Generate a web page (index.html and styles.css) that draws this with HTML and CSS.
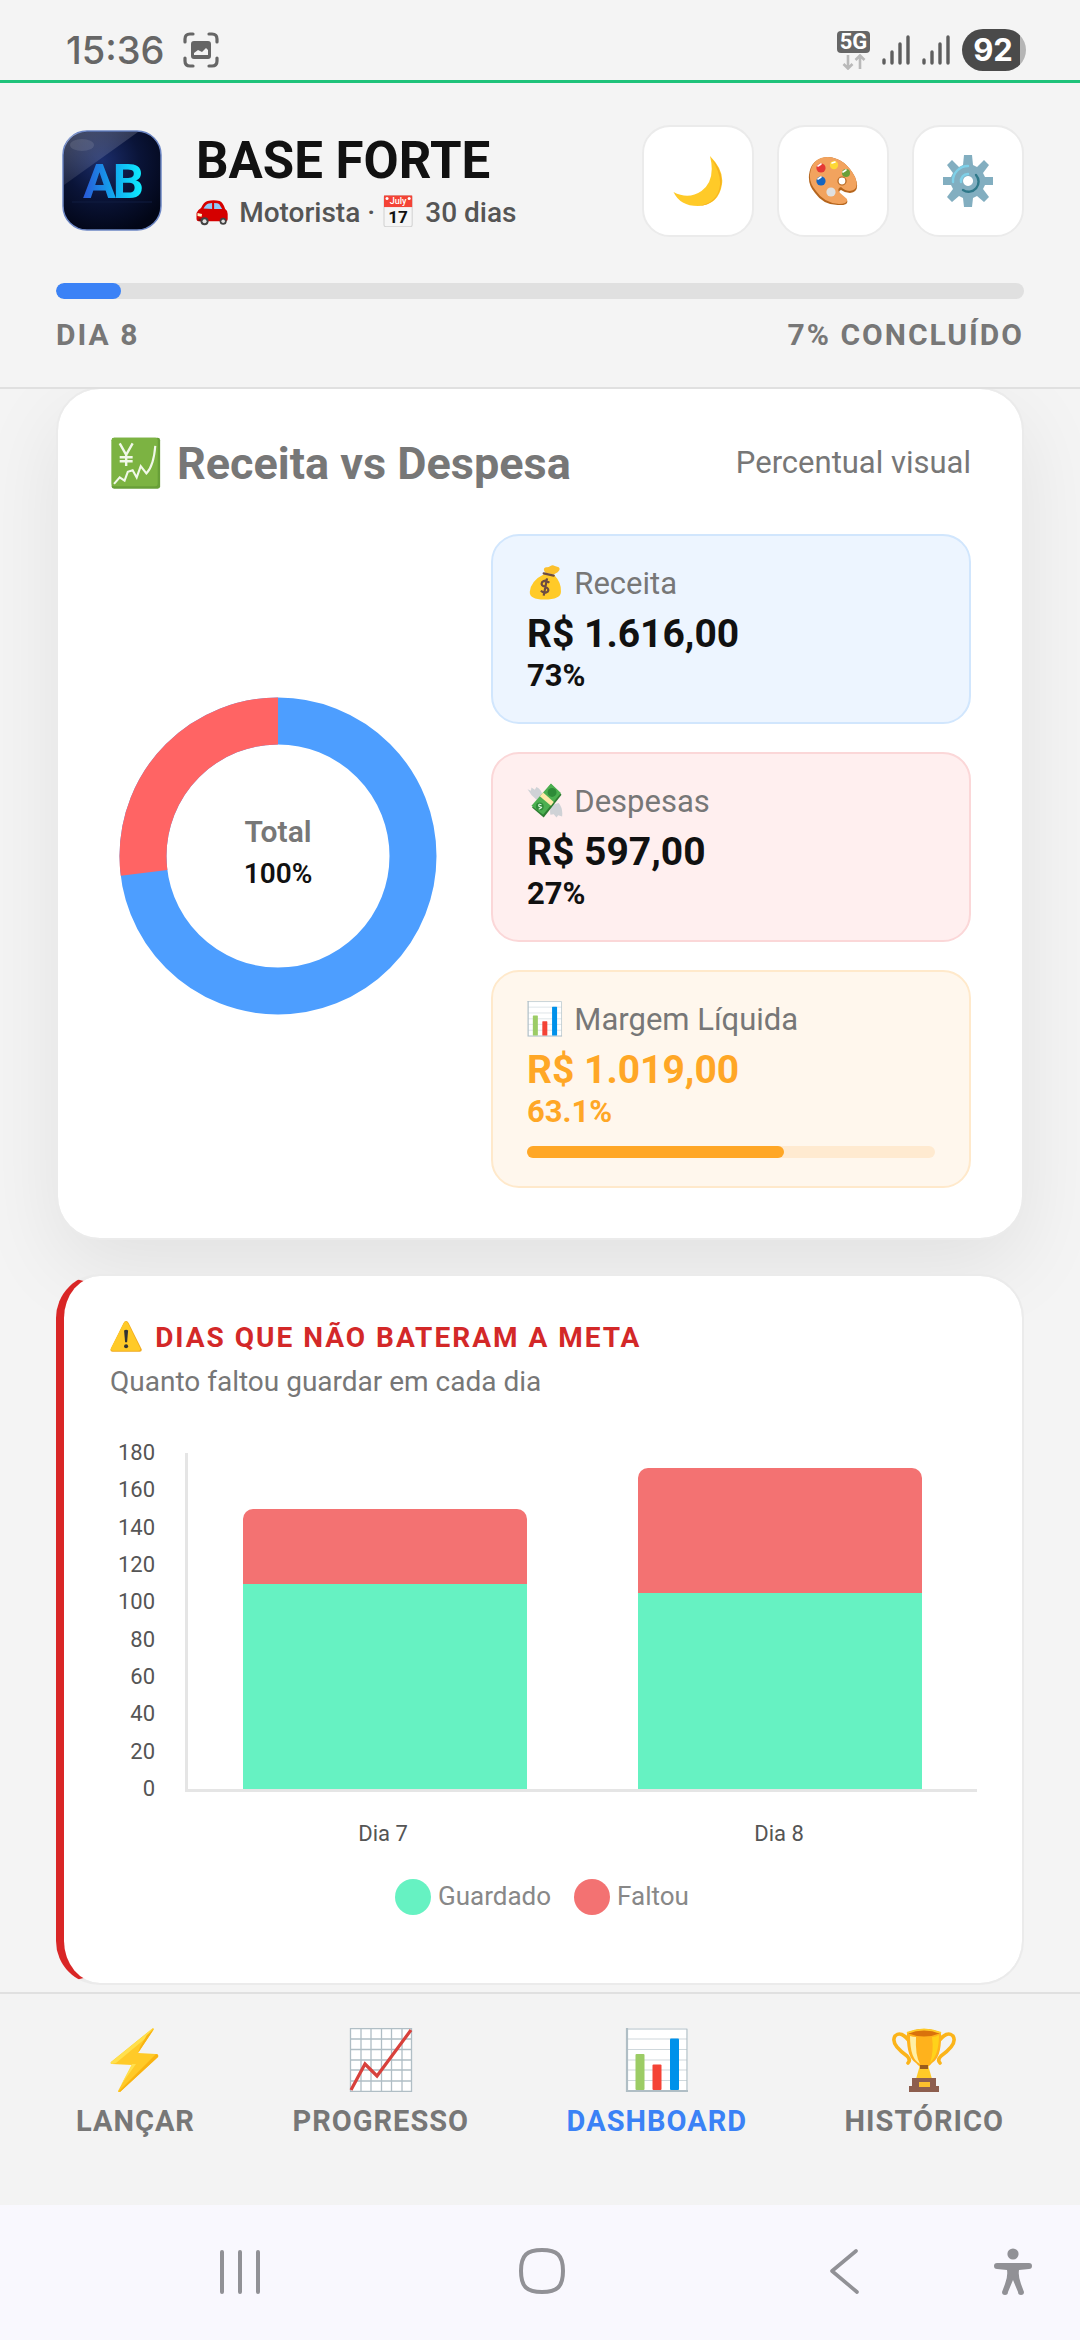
FILE: index.html
```html
<!DOCTYPE html>
<html lang="pt-BR">
<head>
	<meta charset="UTF-8">
	<meta name="viewport" content="width=device-width, initial-scale=1">
	<title>Base Forte</title>

	<link rel="stylesheet" href="styles.css">
</head>
<body>

	<!-- shared icons -->
	<svg class="sprite" aria-hidden="true">
		<symbol id="icon-signal" viewBox="0 0 28 30">
			<path d="M2 25v3M10 17v11M18 9v19M26 2v26" stroke="#5e5e5e" stroke-width="3.4" stroke-linecap="round" fill="none"/>
		</symbol>
		<symbol id="icon-bars" viewBox="0 0 64 64">
			<path d="M1 0h62v64H1z" fill="#fff"/>
			<path d="M2 11h60M2 21.500h60M2 32h60M2 42h60M2 52.500h60" stroke="#cfd8dc" stroke-width="1.200"/>
			<path d="M1 1h61v62" stroke="#b0bec5" stroke-width="1.200" fill="none"/>
			<path d="M2 0v63h61" stroke="#b0bec5" stroke-width="2.200" fill="none"/>
			<rect x="10.500" y="26" width="9" height="36" rx="1" fill="#9ccc65"/>
			<rect x="27.500" y="36.500" width="9" height="25.500" rx="1" fill="#f44336"/>
			<rect x="45" y="10.500" width="9" height="51.500" rx="1" fill="#0091ea"/>
		</symbol>
	</svg>

	<div class="status">
		<div class="status-left">
			<span class="clock">15:36</span>
			<svg width="36" height="36" viewBox="0 0 36 36">
				<path d="M2 10V7q0-5 5-5h3M26 2h3q5 0 5 5v3M34 26v3q0 5-5 5h-3M10 34H7q-5 0-5-5v-3" fill="none" stroke="#666" stroke-width="3.200" stroke-linecap="round"/>
				<path fill-rule="evenodd" d="M11 9h14q3 0 3 3v12q0 3-3 3H11q-3 0-3-3V12q0-3 3-3zM11 23h14v-5l-2-2-4 4-4-2-4 3z" fill="#666"/>
			</svg>
		</div>
		<div class="status-right">
			<div class="network">
				<span class="network-type">5G</span>
				<svg width="24" height="16" viewBox="0 0 24 16">
					<path d="M6 1v13M1.500 10L6 14.500l4.500-4.500M18 15V2M13.500 6L18 1.500 22.500 6" fill="none" stroke="#b9b9b9" stroke-width="2.600"/>
				</svg>
			</div>
			<svg width="28" height="30"><use href="#icon-signal"/></svg>
			<svg width="28" height="30"><use href="#icon-signal"/></svg>
			<span class="battery">92</span>
		</div>
	</div>

	<header class="header">
		<div class="header-top">
			<svg class="logo" viewBox="0 0 112 112">
				<defs>
					<radialGradient id="logo-bg" cx=".4" cy=".3" r=".75">
						<stop offset="0" stop-color="#1b2d6b"/>
						<stop offset=".5" stop-color="#0a1438"/>
						<stop offset="1" stop-color="#020617"/>
					</radialGradient>
					<linearGradient id="logo-text" x1="0" y1="0" x2="1" y2="0">
						<stop offset="0" stop-color="#2a57d6"/>
						<stop offset=".5" stop-color="#12a5ee"/>
						<stop offset="1" stop-color="#0df0ff"/>
					</linearGradient>
					<linearGradient id="logo-shine" x1="0" y1="0" x2=".5" y2="1">
						<stop offset="0" stop-color="#fff" stop-opacity=".24"/>
						<stop offset="1" stop-color="#fff" stop-opacity=".06"/>
					</linearGradient>
				</defs>
				<rect x="7" y="6" width="98" height="99" rx="24" fill="url(#logo-bg)" stroke="#6c86c4" stroke-width="1.500"/>
				<path d="M8 60V30Q8 7 31 7h51z" fill="url(#logo-shine)"/>
				<ellipse cx="26" cy="20" rx="12" ry="6" fill="#fff" opacity=".1"/>
				<path d="M16 77h80" stroke="#101c40" stroke-width="1"/>
				<text x="56" y="73" class="logo-text" fill="url(#logo-text)">AB</text>
			</svg>
			<div class="brand">
				<h1>BASE FORTE</h1>
				<p>
					<svg class="emoji" viewBox="0 0 64 64">
						<path d="M1 36q2-6 9-10 6-13 13-14 12-3 24 0 7 3 11 16 5 3 5 10v10q0 4-4 4H6q-5 0-5-5z" fill="#d50000"/>
						<path d="M15 27q5-9 10-10l7-1v12zM36 16q8 0 10 2l6 10H36z" fill="#90caf9"/>
						<path d="M3 36l9 2-1 5-8-1z" fill="#fff3c4"/>
						<path d="M5 47h12v5H5z" fill="#7a1010"/>
						<circle cx="17" cy="52" r="8" fill="#424242"/><circle cx="17" cy="52" r="4" fill="#e0e0e0"/>
						<circle cx="54" cy="52" r="7" fill="#424242"/><circle cx="54" cy="52" r="3.500" fill="#e0e0e0"/>
					</svg>
					Motorista ·
					<svg class="emoji" viewBox="0 0 64 64">
						<rect x="4" y="1" width="56" height="62" rx="4" fill="#f5f5f5" stroke="#d0d0d0" stroke-width="2"/>
						<path d="M4 1h56v23H4z" fill="#f44336"/>
						<circle cx="10" cy="7" r="3" fill="#fff"/><circle cx="54" cy="7" r="3" fill="#fff"/>
						<text x="32" y="18" class="cal-month">July</text>
						<text x="32" y="56" class="cal-day">17</text>
					</svg>
					30 dias
				</p>
			</div>
			<div class="actions">
				<button type="button" aria-label="Modo noturno">
					<svg viewBox="0 0 50 52">
						<path d="M37 1q14 14 12 28-3 21-24 22Q7 51 .500 37q15 8 28-1Q43 25 37 1z" fill="#ffca28"/>
						<path d="M38 3q13 14 10 28-4 19-23 20 20-3 22-21 1-12-9-27z" fill="#f5b11e"/>
					</svg>
				</button>
				<button type="button" aria-label="Tema de cores">
					<svg viewBox="0 0 50 52">
						<path d="M1 20Q3 3 20 2q17 1 27 20 6 15-5 16-5 0-9-3-3 1-1 4l7 6q2 5-7 5Q16 51 7 38 0 30 1 20z" fill="#b5651d"/>
						<path d="M2 19Q4 2 20 2q17 1 27 20 5 13-5 14-5 0-9-4-4 1-2 5l8 7q1 5-8 5-15-1-23-13Q1 28 2 19z" fill="#f2a35e"/>
						<circle cx="34" cy="26" r="4" fill="#fff" stroke="#b5651d" stroke-width="1.200"/>
						<circle cx="13" cy="13" r="4.600" fill="#e53935"/><circle cx="26" cy="10" r="4.200" fill="#fdd835"/>
						<circle cx="38" cy="18" r="4" fill="#689f38"/><circle cx="13" cy="26" r="4.600" fill="#1565c0"/>
						<circle cx="23" cy="37" r="4.600" fill="#e0e0e0"/>
						<path d="M10 11l3-2M24 8l3-1M35 17l3-2M10 24l3-2" stroke="#fff" stroke-width="1.600" stroke-linecap="round"/>
					</svg>
				</button>
				<button type="button" aria-label="Configurações">
					<svg viewBox="0 0 50 52">
						<path fill-rule="evenodd" d="M21 0h8l1 10 4 2 7-7 5 5-6 8 2 4h8v8h-8l-2 4 6 8-5 5-7-6-4 2-1 9h-8l-1-9-4-2-7 6-5-5 6-8-2-4H0v-8h8l2-4-6-8 5-5 7 7 4-2zM25 21a5 5 0 1 0 .1 0z" fill="#82aec0"/>
						<path d="M10 27a15 15 0 0 1 15-16M18 27a7 7 0 0 1 7-8" stroke="#7fd0e8" stroke-width="2.400" fill="none" stroke-linecap="round"/>
						<path d="M33 20a10 10 0 0 1-13 15" stroke="#2f7889" stroke-width="2.400" fill="none" stroke-linecap="round"/>
					</svg>
				</button>
			</div>
		</div>
		<div class="progress"><div class="progress-fill" style="width: 6.7%"></div></div>
		<div class="progress-labels">
			<span>DIA 8</span>
			<span>7% CONCLUÍDO</span>
		</div>
	</header>

	<main class="content">

		<section class="card">
			<div class="card-head">
				<h2>
					<svg class="emoji" viewBox="0 0 64 64">
						<rect x="2" y="1" width="60" height="63" rx="3" fill="#689f38"/>
						<rect x="2" y="1" width="57" height="60" rx="3" fill="#7cb342"/>
						<path d="M12 8l8 14 8-14M20 22v14M12 25h16M12 30h16" stroke="#f1f8e9" stroke-width="3" fill="none"/>
						<path d="M5 58l7-8 6 4 4-11 6-2 5 9 5-14 7 9q9-9 11-34" stroke="#f1f8e9" stroke-width="2.600" fill="none"/>
					</svg>
					Receita vs Despesa
				</h2>
				<span class="hint">Percentual visual</span>
			</div>

			<div class="summary">
				<div class="donut">
					<svg viewBox="0 0 320 320">
						<circle cx="160" cy="160" r="135" pathLength="100" class="ring ring-income"/>
						<circle cx="160" cy="160" r="135" pathLength="100" class="ring ring-expense"/>
					</svg>
					<div class="donut-label">
						<span>Total</span>
						<strong>100%</strong>
					</div>
				</div>

				<div class="boxes">
					<div class="box income">
						<h3>
							<svg class="emoji" viewBox="0 0 64 64">
								<path d="M33 14Q27 6 34 4q4 1 8-2 4-3 8 0l7 2q4 4-2 9l-7 4z" fill="#fbc02d"/>
								<path d="M31 16l18 2q13 14 12 30 0 14-30 14Q4 62 5 48q2-20 26-32z" fill="#ffca28"/>
								<path d="M30 15l18 4" stroke="#6d4c41" stroke-width="4" stroke-linecap="round"/>
								<path d="M40 32q-7-7-13-1-3 6 6 8 8 4 4 9-6 5-12-2M36 24l-6 31" stroke="#6d4c41" stroke-width="4" fill="none"/>
							</svg>
							Receita
						</h3>
						<strong class="value">R$ 1.616,00</strong>
						<span class="pct">73%</span>
					</div>
					<div class="box expense">
						<h3>
							<svg class="emoji" viewBox="0 0 64 64">
								<path d="M1 11l6 3 1-6 6 4 3-5q10 5 10 15L17 30Q7 22 1 11zM63 60l-7-2-3 4-5-6-6 1q-2-12 3-18l12-3q8 10 6 24z" fill="#cfd2d6"/>
								<path d="M43 2l19 19-32 41L9 44z" fill="#2e7d32"/>
								<path d="M43 1l18 17-32 39L8 41z" fill="#4caf50"/>
								<circle cx="45" cy="17" r="8" fill="#2e8b38"/><circle cx="23" cy="42" r="7" fill="#2e8b38"/>
								<path d="M29 17l19 17-5 7-20-17z" fill="#ffe9a8"/>
								<path d="M26 39q-5-2-5 1t4 3-4 4" stroke="#d8f5d8" stroke-width="2" fill="none"/>
							</svg>
							Despesas
						</h3>
						<strong class="value">R$ 597,00</strong>
						<span class="pct">27%</span>
					</div>
					<div class="box margin">
						<h3>
							<svg class="emoji"><use href="#icon-bars"/></svg>
							Margem Líquida
						</h3>
						<strong class="value">R$ 1.019,00</strong>
						<span class="pct">63.1%</span>
						<div class="meter"><div class="meter-fill" style="width: 63.1%"></div></div>
					</div>
				</div>
			</div>
		</section>

		<section class="card alert">
			<h2>
				<svg class="emoji" viewBox="0 0 64 64">
					<path d="M32 2q3 0 5 4l26 52q1 5-4 5H5q-5 0-4-5L27 6q2-4 5-4z" fill="#f0a91c"/>
					<path d="M31 3q3 0 5 4l24 49q1 5-4 5H6q-5 0-4-5L27 7q1-4 4-4z" fill="#ffca28"/>
					<path d="M28 21q4-3 8 0l-2 23h-4z" fill="#333"/><circle cx="32" cy="52" r="4" fill="#333"/>
				</svg>
				DIAS QUE NÃO BATERAM A META
			</h2>
			<p class="subtitle">Quanto faltou guardar em cada dia</p>

			<div class="chart">
				<div class="ticks">
					<span>180</span>
					<span>160</span>
					<span>140</span>
					<span>120</span>
					<span>100</span>
					<span>80</span>
					<span>60</span>
					<span>40</span>
					<span>20</span>
					<span>0</span>
				</div>
				<div class="plot">
					<div class="bar">
						<div class="missing" style="height: 22.4%"></div>
						<div class="saved" style="height: 60.9%"></div>
					</div>
					<div class="bar">
						<div class="missing" style="height: 37.3%"></div>
						<div class="saved" style="height: 58.2%"></div>
					</div>
				</div>
				<div class="days">
					<span>Dia 7</span>
					<span>Dia 8</span>
				</div>
			</div>

			<div class="legend">
				<span><i class="dot saved"></i>Guardado</span>
				<span><i class="dot missing"></i>Faltou</span>
			</div>
		</section>

	</main>

	<nav class="tabs">
		<a href="#lancar">
			<svg viewBox="0 0 64 64">
				<path d="M50 0L8 34q-1 2 1 2l20 1-14 26q0 2 2 1l38-35q1-3-2-3l-18-1L51 1z" fill="#ffca28"/>
				<path d="M50 0L8 34q-1 2 1 2l4-1 30-25zM33 36h-4L18 57z" fill="#ffe04d"/>
				<path d="M17 64l38-35q1-3-2-3L16 63zM51 1L35 25l2-6 7-12z" fill="#f9b312"/>
			</svg>
			LANÇAR
		</a>
		<a href="#progresso">
			<svg viewBox="0 0 64 64">
				<path d="M1 0h62v64H1z" fill="#fff"/>
				<path d="M1.500.500h61v63h-61zM12 0v64M22 0v64M32.500 0v64M42.500 0v64M53 0v64M1 11h62M1 21.500h62M1 32h62M1 42h62M1 53h62" stroke="#b0bec5" stroke-width="1.300" fill="none"/>
				<path d="M2 62l14-26 12 12L62 2" stroke="#d8413c" stroke-width="3.200" fill="none"/>
			</svg>
			PROGRESSO
		</a>
		<a href="#dashboard" class="active">
			<svg><use href="#icon-bars"/></svg>
			DASHBOARD
		</a>
		<a href="#historico">
			<svg viewBox="0 0 64 64">
				<path d="M18 14Q9 2 3 8q-5 8 12 20 4 4 1 7M46 14q9-12 15-6 5 8-12 20-4 4-1 7" stroke="#fbb41a" stroke-width="3.600" fill="none" stroke-linecap="round"/>
				<path d="M28 37h8l4 14H24z" fill="#ffca28"/>
				<path d="M15 5q17-8 34 0 1 24-9 30-4 5-8 5t-8-5Q14 29 15 5z" fill="#ffb21c"/>
				<path d="M18 8q3 1 6 1-1 18 4 27-10-5-10-28z" fill="#fff0a6"/>
				<path d="M40 9q4 0 7-2 0 20-9 28 4-12 2-26z" fill="#ffd21a"/>
				<path d="M15 5q17-8 34 0-17 7-34 0z" fill="#d9720c"/>
				<path d="M15 5q17-7 34 0" stroke="#ffca28" stroke-width="2" fill="none"/>
				<path d="M28 37h8v4h-8z" fill="#9a5b1c"/>
				<path d="M20 50h24v8h3v6H17v-6h3z" fill="#8d5e4e"/>
				<rect x="27" y="54" width="11" height="5" fill="#fbc02d"/>
			</svg>
			HISTÓRICO
		</a>
	</nav>

	<div class="system-nav">
		<button type="button" aria-label="Recentes">
			<svg width="48" height="48" viewBox="0 0 48 48"><path d="M6 5v40M24 5v40M42 5v40" stroke="#919196" stroke-width="4" stroke-linecap="round"/></svg>
		</button>
		<button type="button" aria-label="Início">
			<svg width="48" height="48" viewBox="0 0 48 48"><path d="M24 3C9 3 3 8 3 24s6 21 21 21 21-5 21-21S39 3 24 3z" fill="none" stroke="#919196" stroke-width="4"/></svg>
		</button>
		<button type="button" aria-label="Voltar">
			<svg width="48" height="48" viewBox="0 0 48 48"><path d="M35 4L11 24l25 21" fill="none" stroke="#919196" stroke-width="3.600" stroke-linecap="round" stroke-linejoin="round"/></svg>
		</button>
		<button type="button" aria-label="Acessibilidade">
			<svg width="48" height="48" viewBox="0 0 48 48">
				<circle cx="24" cy="7" r="5.600" fill="#919196"/>
				<path d="M8 16h32q3 0 3 3t-3 3l-10 1q-1 6 2 14l3 8q0 3-3 3t-3-3l-5-12-5 12q0 3-3 3t-3-3l3-8q3-8 2-14l-10-1q-3 0-3-3t3-3z" fill="#919196"/>
			</svg>
		</button>
	</div>

</body>
</html>
```

FILE: styles.css
```css
* {
	box-sizing: border-box;
}

body {
	font-family: Roboto, sans-serif;
	background: #f4f4f4;
	color: #111;
	margin: 0;
	min-height: 100vh;
	display: flex;
	flex-direction: column;
}

h1, h2, h3, p {
	margin: 0;
}

button {
	border: 0;
	padding: 0;
	background: none;
	cursor: pointer;
}

svg {
	display: block;
	flex: none;
}

.sprite {
	position: absolute;
	width: 0;
	height: 0;
}

/* inline pictograms follow the text size */
.emoji {
	display: inline-block;
	width: 1.15em;
	height: 1.15em;
	margin-right: 4px;
	vertical-align: -5px;
}

/* status bar */
.status {
	display: flex;
	justify-content: space-between;
	align-items: center;
	height: 83px;
	padding: 20px 54px 0 66px;
	border-bottom: 3px solid #1fc27a;
}

.status-left, .status-right {
	display: flex;
	align-items: center;
}

.status-left {
	gap: 18px;
}

.status-right {
	gap: 12px;
}

.clock {
	font-family: Inter, sans-serif;
	font-size: 38px;
	font-weight: 500;
	color: #666;
}

.network {
	display: flex;
	flex-direction: column;
	align-items: center;
	gap: 1px;
}

.network-type {
	width: 33px;
	background: #666;
	color: #fff;
	border-radius: 4px;
	font-size: 22px;
	font-weight: 700;
	line-height: 22px;
	text-align: center;
}

.battery {
	width: 64px;
	padding-right: 2px;
	border-radius: 21px;
	background: linear-gradient(90deg, #4a4a4a 91%, #b5b5b5 91%);
	color: #fff;
	font-family: Inter, sans-serif;
	font-size: 31px;
	font-weight: 700;
	line-height: 42px;
	text-align: center;
}

/* header */
.header {
	position: relative;
	z-index: 1;
	padding: 42px 56px 34px;
	background: #f4f4f4;
	border-bottom: 2px solid #e0e0e0;
}

.header-top {
	display: flex;
	align-items: center;
	gap: 28px;
}

.logo {
	width: 112px;
	height: 112px;
}

.logo-text {
	font-size: 49px;
	font-weight: 700;
	letter-spacing: -3px;
	text-anchor: middle;
}

.brand {
	flex: 1;
}

.brand h1 {
	font-size: 51px;
	line-height: 60px;
	font-weight: 700;
}

.brand p {
	margin-top: 4px;
	font-size: 28px;
	line-height: 36px;
	font-weight: 500;
	color: #555;
	white-space: nowrap;
}

.cal-month {
	font-size: 18px;
	font-weight: 500;
	fill: #fff;
	text-anchor: middle;
}

.cal-day {
	font-size: 34px;
	font-weight: 700;
	fill: #111;
	text-anchor: middle;
}

.actions {
	display: flex;
	gap: 23px;
}

.actions button {
	display: flex;
	align-items: center;
	justify-content: center;
	width: 112px;
	height: 112px;
	background: #fff;
	border: 2px solid #ebebeb;
	border-radius: 28px;
}

.actions svg {
	width: 50px;
	height: 52px;
}

.progress {
	height: 16px;
	margin-top: 46px;
	border-radius: 8px;
	background: #e0e0e0;
	overflow: hidden;
}

.progress-fill {
	height: 100%;
	border-radius: 8px;
	background: #3b82f6;
}

.progress-labels {
	display: flex;
	justify-content: space-between;
	margin-top: 18px;
	font-size: 30px;
	line-height: 36px;
	font-weight: 700;
	letter-spacing: 2px;
	color: #777;
}

/* cards */
.content {
	flex: 1;
	display: flex;
	flex-direction: column;
	gap: 34px;
	margin-top: -2px;
	padding: 0 56px;
}

.card {
	padding: 48px 51px 50px 52px;
	background: #fff;
	border: 2px solid #ebebeb;
	border-radius: 44px;
	background-clip: padding-box;
	box-shadow: 0 28px 84px rgba(0, 0, 0, 0.08);
}

.card-head {
	display: flex;
	justify-content: space-between;
	align-items: center;
	margin-bottom: 44px;
}

.card-head h2 {
	font-size: 45px;
	line-height: 52px;
	color: #777;
}

.card-head .emoji {
	vertical-align: -10px;
}

.hint {
	font-size: 31px;
	line-height: 38px;
	color: #777;
}

.summary {
	display: grid;
	grid-template-columns: 336px 1fr;
	gap: 45px;
	align-items: center;
}

.donut {
	display: grid;
	place-items: center;
	margin-bottom: 10px;
}

.donut > * {
	grid-area: 1 / 1;
}

.donut svg {
	width: 320px;
	height: 320px;
}

.ring {
	fill: none;
	stroke-width: 47px;
	transform: rotate(-90deg);
	transform-origin: center;
}

.ring-income {
	stroke: #4d9eff;
}

.ring-expense {
	stroke: #ff6464;
	stroke-dasharray: 27 73;
	stroke-dashoffset: -73;
}

.donut-label {
	display: flex;
	flex-direction: column;
	align-items: center;
	margin-bottom: 6px;
	font-size: 30px;
	line-height: 42px;
	font-weight: 600;
	color: #777;
}

.donut-label strong {
	font-size: 28px;
	font-weight: 600;
	color: #111;
}

.boxes {
	display: flex;
	flex-direction: column;
	gap: 28px;
}

.box {
	display: flex;
	flex-direction: column;
	padding: 28px 34px;
	border: 2px solid;
	border-radius: 28px;
}

.box h3 {
	height: 40px;
	font-size: 31px;
	line-height: 40px;
	font-weight: 400;
	color: #777;
}

.box .emoji {
	vertical-align: -7px;
}

.value {
	margin-top: 6px;
	font-size: 39px;
	line-height: 48px;
}

.pct {
	font-size: 31px;
	line-height: 36px;
	font-weight: 700;
}

.income {
	background: #edf5ff;
	border-color: #d1e6fd;
}

.expense {
	background: #ffefef;
	border-color: #fbd7d8;
}

.margin {
	background: #fff7ed;
	border-color: #ffe9cb;
}

.margin .value, .margin .pct {
	color: #ffa726;
}

.meter {
	height: 12px;
	margin-top: 16px;
	border-radius: 6px;
	background: #ffead0;
}

.meter-fill {
	height: 100%;
	border-radius: 6px;
	background: #ffa726;
}

/* missed days */
.alert {
	padding: 44px 45px 68px 46px;
	border-left: 8px solid #d92626;
	box-shadow: none;
}

.alert h2 {
	font-size: 28px;
	line-height: 36px;
	letter-spacing: 2px;
	color: #d32828;
}

.subtitle {
	margin-top: 8px;
	font-size: 28px;
	line-height: 36px;
	color: #777;
}

.chart {
	display: grid;
	grid-template-columns: 45px 1fr;
	column-gap: 30px;
	margin-top: 53px;
	font-size: 22px;
	color: #555;
}

.ticks {
	display: flex;
	flex-direction: column;
	justify-content: space-between;
	margin: -11px 0 -8px;
	line-height: 22px;
	text-align: right;
}

.plot {
	display: flex;
	justify-content: space-around;
	height: 339px;
	border-left: 3px solid #e5e5e5;
	border-bottom: 3px solid #e5e5e5;
}

.bar {
	width: 36%;
	display: flex;
	flex-direction: column;
	justify-content: flex-end;
}

.bar .missing {
	border-radius: 10px 10px 0 0;
}

.saved {
	background: #66f2c2;
}

.missing {
	background: #f37272;
}

.days {
	grid-column: 2;
	display: flex;
	justify-content: space-around;
	margin-top: 28px;
	line-height: 28px;
	text-align: center;
}

.days span {
	width: 36%;
}

.legend {
	display: flex;
	justify-content: center;
	gap: 23px;
	margin-top: 31px;
	padding-right: 3px;
	font-size: 26px;
	line-height: 34px;
	color: #888;
}

.legend span {
	display: flex;
	gap: 7px;
}

.dot {
	width: 36px;
	height: 36px;
	border-radius: 50%;
}

/* bottom tabs */
.tabs {
	display: flex;
	justify-content: space-between;
	padding: 34px 76px 67px;
	background: #f3f3f3;
	border-top: 2px solid #e0e0e0;
}

.tabs a {
	display: flex;
	flex-direction: column;
	align-items: center;
	gap: 12px;
	font-size: 29px;
	line-height: 34px;
	font-weight: 700;
	letter-spacing: 1px;
	color: #777;
	text-decoration: none;
}

.tabs svg {
	width: 64px;
	height: 64px;
}

.tabs .active {
	color: #3b82f6;
}

/* three evenly spread buttons, accessibility closer to the edge */
.system-nav {
	display: grid;
	grid-template-columns: 9fr 9fr 5fr 48px;
	align-items: center;
	height: 135px;
	padding: 0 4% 4px 20%;
	background: #f9f8fe;
}

.system-nav button {
	justify-self: start;
}
```
